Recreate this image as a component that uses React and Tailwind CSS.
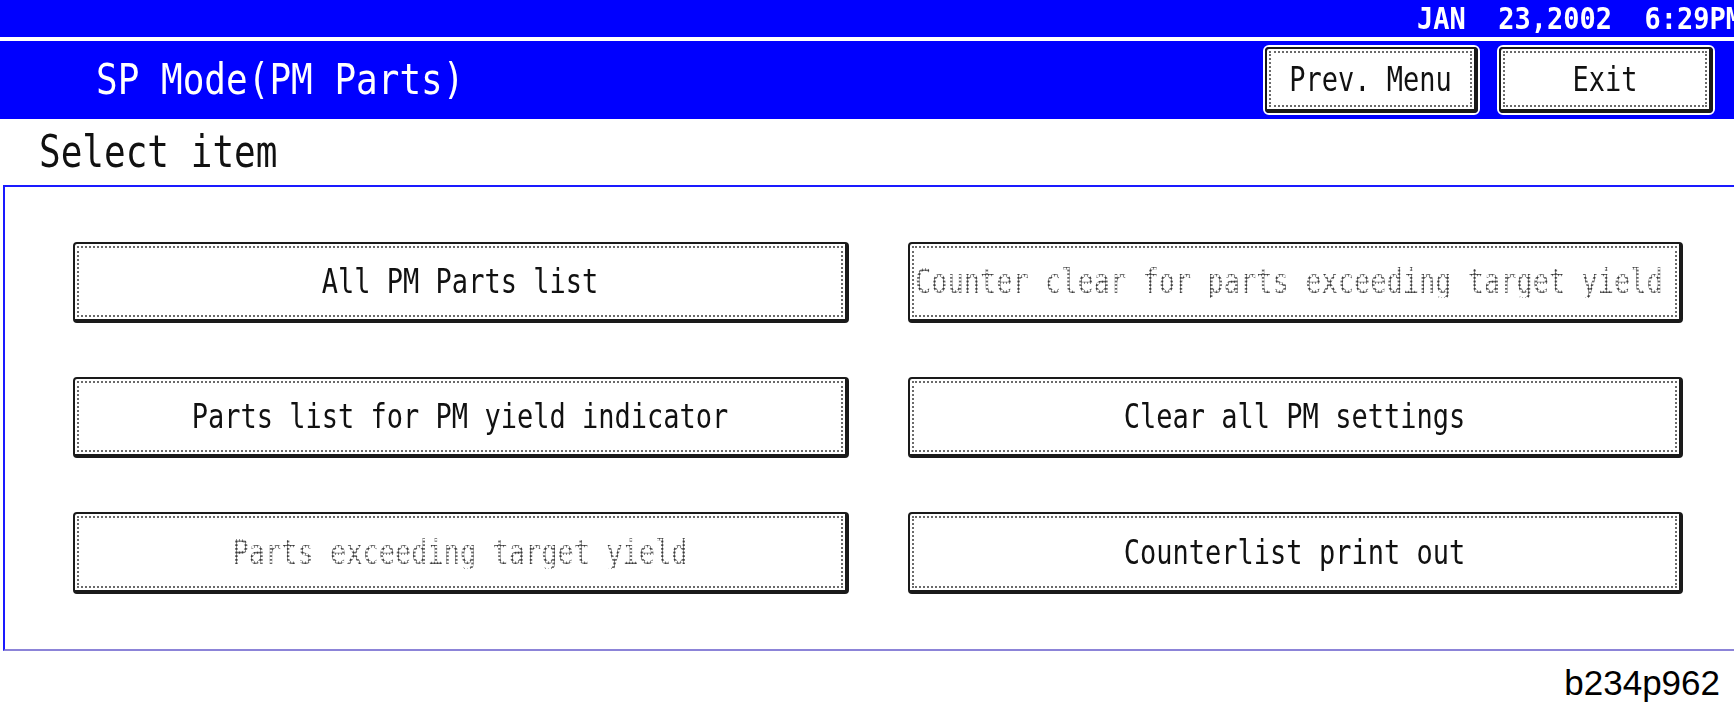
import React from "react";

const mono = { fontFamily: '"DejaVu Sans Mono", "Liberation Mono", monospace' };

function Btn({ children, className = "", gray = false, left = false }) {
  return (
    <div className={`rounded-[4px] border-t-2 border-l-2 border-b-[4px] border-r-[4px] border-[#1a1a1a] bg-white p-[2px] ${className}`}>
      <div
        className={`flex h-full w-full items-center overflow-hidden border-2 border-dotted border-[#6a6a6a] ${
          left ? "justify-start pl-[1px]" : "justify-center"
        }`}
      >
        <span
          style={mono}
          className={`inline-block scale-y-[1.22] whitespace-pre text-[27px] leading-none ${
            gray
              ? "bg-[radial-gradient(circle,#3a3a3a_1px,transparent_1.3px)] bg-[length:3px_3px] bg-clip-text text-transparent"
              : "text-[#111]"
          }`}
        >
          {children}
        </span>
      </div>
    </div>
  );
}

export default function App() {
  return (
    <div className="relative h-[709px] w-[1734px] overflow-hidden bg-white">
      {/* top status bar */}
      <div className="flex h-[37px] items-center justify-end bg-[#0000ff]">
        <span
          style={mono}
          className="mr-[-8px] inline-block scale-y-[1.1] whitespace-pre text-[27px] font-bold leading-none text-white"
        >
          {"JAN  23,2002  6:29PM"}
        </span>
      </div>
      <div className="h-[4px] bg-white" />
      {/* title band */}
      <div className="flex h-[78px] items-center bg-[#0000ff]">
        <span
          style={mono}
          className="ml-[96px] inline-block scale-y-[1.2] whitespace-pre text-[36px] leading-none text-white"
        >
          SP Mode(PM Parts)
        </span>
        <div className="ml-auto mr-[19px] flex gap-[17px]">
          <div className="rounded-[6px] border-2 border-white">
            <Btn className="h-[66px] w-[213px]">Prev. Menu</Btn>
          </div>
          <div className="rounded-[6px] border-2 border-white">
            <Btn className="h-[66px] w-[214px]">Exit</Btn>
          </div>
        </div>
      </div>
      {/* select item */}
      <div className="flex h-[66px] items-center">
        <span
          style={mono}
          className="ml-[39px] inline-block scale-y-[1.22] whitespace-pre text-[36px] leading-none text-[#111]"
        >
          Select item
        </span>
      </div>
      {/* main box */}
      <div className="ml-[3px] h-[466px] border-l-2 border-t-2 border-b-2 border-l-[#1a1aff] border-t-[#1a1aff] border-b-[#8c84d8] pl-[68px] pt-[55px]">
        <div className="grid grid-cols-[776px_775px] grid-rows-[81px_81px_82px] gap-x-[59px] gap-y-[54px]">
          <Btn>All PM Parts list</Btn>
          <Btn gray left>
            Counter clear for parts exceeding target yield
          </Btn>
          <Btn>Parts list for PM yield indicator</Btn>
          <Btn>Clear all PM settings</Btn>
          <Btn gray>Parts exceeding target yield</Btn>
          <Btn>Counterlist print out</Btn>
        </div>
      </div>
      {/* figure label */}
      <div className="flex justify-end pr-[14px] pt-[14px]">
        <span
          style={{ fontFamily: '"Liberation Sans", Arial, sans-serif' }}
          className="text-[35px] leading-none text-black"
        >
          b234p962
        </span>
      </div>
    </div>
  );
}
